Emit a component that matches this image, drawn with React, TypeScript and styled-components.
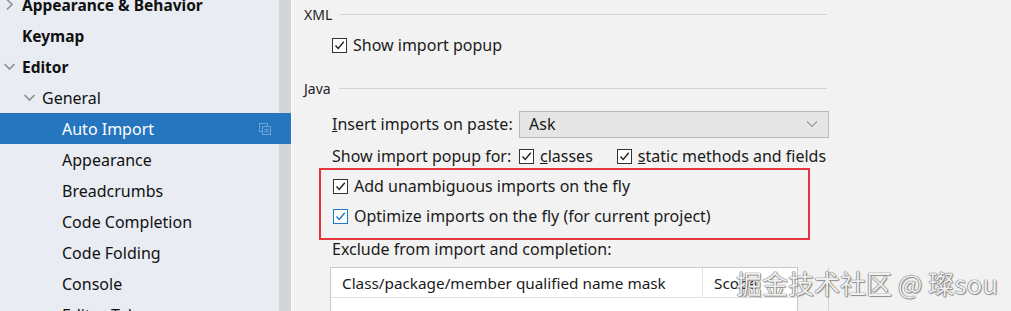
import React from "react";
import styled, { createGlobalStyle } from "styled-components";

const Global = createGlobalStyle`
  *, *::before, *::after { box-sizing: border-box; }
  body {
    margin: 0;
    background: #f2f2f2;
    font-family: "Noto Sans", "Open Sans", sans-serif;
    color: #1a1a1a;
  }
`;

type TreeItem = { label: string; level: number; bold?: boolean; arrow?: "right" | "down"; selected?: boolean };

const tree: TreeItem[] = [
  { label: "Appearance & Behavior", level: 0, bold: true, arrow: "right" },
  { label: "Keymap", level: 0, bold: true },
  { label: "Editor", level: 0, bold: true, arrow: "down" },
  { label: "General", level: 1, arrow: "down" },
  { label: "Auto Import", level: 2, selected: true },
  { label: "Appearance", level: 2 },
  { label: "Breadcrumbs", level: 2 },
  { label: "Code Completion", level: 2 },
  { label: "Code Folding", level: 2 },
  { label: "Console", level: 2 },
  { label: "Editor Tabs", level: 2 },
];

const Arrow = ({ dir }: { dir: "right" | "down" }) => (
  <svg width="13" height="13" viewBox="0 0 13 13">
    {dir === "right" ? (
      <path d="M4 1.5 L9 6.5 L4 11.5" fill="none" stroke="#8f9194" strokeWidth="1.7" />
    ) : (
      <path d="M1.5 4 L6.5 9 L11.5 4" fill="none" stroke="#8f9194" strokeWidth="1.7" />
    )}
  </svg>
);

const CopyIcon = () => (
  <svg width="12" height="12" viewBox="0 0 12 12">
    <rect x="0.5" y="0.5" width="8" height="8" fill="none" stroke="#6fa6d8" />
    <rect x="3.5" y="3.5" width="8" height="8" fill="#2a77c0" stroke="#6fa6d8" />
    <path d="M5.5 6.5 H9.5 M5.5 8.5 H9.5" stroke="#6fa6d8" />
  </svg>
);

const CheckMark = ({ color }: { color: string }) => (
  <svg width="13" height="13" viewBox="0 0 13 13">
    <path d="M2.5 6.5 L5.2 9.5 L10.8 2.8" fill="none" stroke={color} strokeWidth="1.4" />
  </svg>
);

const CheckBox = ({ label, accent, mnemonic }: { label: string; accent?: boolean; mnemonic?: boolean }) => (
  <Check>
    <Box $accent={accent}>
      <CheckMark color={accent ? "#1c78c8" : "#222"} />
    </Box>
    {mnemonic ? (
      <span>
        <u>{label[0]}</u>
        {label.slice(1)}
      </span>
    ) : (
      <span>{label}</span>
    )}
  </Check>
);

export default function App() {
  return (
    <>
      <Global />
      <Frame>
        <Sidebar>
          <TreeList>
            {tree.map((t) => (
              <TreeRow key={t.label} $level={t.level} $selected={t.selected}>
                <ArrowSlot>{t.arrow && <Arrow dir={t.arrow} />}</ArrowSlot>
                <TreeLabel $bold={t.bold}>{t.label}</TreeLabel>
                {t.selected && (
                  <RowIcon>
                    <CopyIcon />
                  </RowIcon>
                )}
              </TreeRow>
            ))}
          </TreeList>
        </Sidebar>
        <Content>
          <Section>
            <SectionTitle>XML</SectionTitle>
            <Rule />
          </Section>
          <Indented $top={2}>
            <CheckBox label="Show import popup" />
          </Indented>
          <Section $top={14}>
            <SectionTitle>Java</SectionTitle>
            <Rule />
          </Section>
          <FormGrid>
            <FieldLabel>
              <u>I</u>nsert imports on paste:
            </FieldLabel>
            <Select>
              <span>Ask</span>
              <svg width="12" height="8" viewBox="0 0 12 8">
                <path d="M1 1.5 L6 6.5 L11 1.5" fill="none" stroke="#9a9a9a" strokeWidth="1.2" />
              </svg>
            </Select>
            <FieldLabel>Show import popup for:</FieldLabel>
            <CheckGroup>
              <CheckBox label="classes" mnemonic />
              <CheckBox label="static methods and fields" mnemonic />
            </CheckGroup>
          </FormGrid>
          <Highlight>
            <HighlightRow>
              <CheckBox label="Add unambiguous imports on the fly" />
            </HighlightRow>
            <HighlightRow>
              <CheckBox label="Optimize imports on the fly (for current project)" accent />
            </HighlightRow>
          </Highlight>
          <Caption>Exclude from import and completion:</Caption>
          <TableArea>
            <Table>
              <HeaderRow>
                <HeadCell $width={372}>Class/package/member qualified name mask</HeadCell>
                <HeadCell>Scope</HeadCell>
              </HeaderRow>
            </Table>
            <SideStrip />
          </TableArea>
        </Content>
        <Watermark>掘金技术社区 @ 璨sou</Watermark>
      </Frame>
    </>
  );
}

const Frame = styled.div`
  position: relative;
  display: flex;
  height: 311px;
  overflow: hidden;
  font-size: 16px;
`;

const Sidebar = styled.div`
  width: 291px;
  flex-shrink: 0;
  background: linear-gradient(to right, #e9ecf2 0, #e9ecf2 279px, #d3d5d9 279px);
`;

const TreeList = styled.div`
  margin-top: -11px;
`;

const TreeRow = styled.div<{ $level: number; $selected?: boolean }>`
  display: flex;
  align-items: center;
  height: 31px;
  padding-left: ${(p) => 3 + p.$level * 20}px;
  padding-right: 20px;
  background: ${(p) => (p.$selected ? "#2675bf" : "transparent")};
  color: ${(p) => (p.$selected ? "#fff" : "#111")};
`;

const ArrowSlot = styled.div`
  width: 19px;
  display: flex;
  align-items: center;
`;

const TreeLabel = styled.span<{ $bold?: boolean }>`
  font-weight: ${(p) => (p.$bold ? 700 : 400)};
  font-size: ${(p) => (p.$bold ? 15.5 : 16)}px;
  flex: 1;
`;

const RowIcon = styled.div`
  display: flex;
`;

const Content = styled.div`
  flex: 1;
  border-left: 1px solid #fafafa;
  padding: 0 182px 0 12px;
`;

const Section = styled.div<{ $top?: number }>`
  display: flex;
  align-items: center;
  gap: 8px;
  height: 28px;
  margin-top: ${(p) => p.$top ?? 0}px;
`;

const SectionTitle = styled.span`
  font-size: 14px;
  color: #222;
`;

const Rule = styled.div`
  flex: 1;
  height: 1px;
  margin-right: 2px;
  background: #d3d3d3;
`;

const Indented = styled.div<{ $top: number }>`
  padding-left: 28px;
  height: 30px;
  display: flex;
  align-items: center;
  margin-top: ${(p) => p.$top}px;
`;

const Check = styled.label`
  display: inline-flex;
  align-items: center;
  gap: 6px;
  white-space: nowrap;
`;

const Box = styled.span<{ $accent?: boolean }>`
  width: 15px;
  height: 15px;
  border: 1px solid ${(p) => (p.$accent ? "#1c78c8" : "#333")};
  background: #fff;
  display: flex;
  align-items: center;
  justify-content: center;
`;

const FormGrid = styled.div`
  display: grid;
  grid-template-columns: 187px 1fr;
  grid-auto-rows: 32px;
  align-items: center;
  padding-left: 28px;
  margin-top: 6px;
`;

const FieldLabel = styled.span`
  white-space: nowrap;
`;

const Select = styled.div`
  height: 27px;
  border: 1px solid #b9b9b9;
  background: #e6e6e6;
  display: flex;
  align-items: center;
  justify-content: space-between;
  padding: 0 10px 0 9px;
`;

const CheckGroup = styled.div`
  display: flex;
  gap: 24px;
`;

const Highlight = styled.div`
  border: 2px solid #e5343d;
  margin: -4px 19px 0 15px;
  padding: 1px 0 7px 12px;
`;

const HighlightRow = styled.div`
  height: 30px;
  display: flex;
  align-items: center;
`;

const Caption = styled.div`
  padding-left: 28px;
  height: 18px;
  line-height: 18px;
  white-space: nowrap;
`;

const TableArea = styled.div`
  display: flex;
  margin: 9px 0 0 26px;
  height: 60px;
`;

const Table = styled.div`
  width: 468px;
  background: #fff;
  border: 1px solid #c9c9c9;
  border-bottom: none;
`;

const HeaderRow = styled.div`
  display: flex;
  height: 30px;
  border-bottom: 1px solid #e2e2e2;
  font-size: 15.3px;
`;

const HeadCell = styled.div<{ $width?: number }>`
  width: ${(p) => (p.$width ? `${p.$width}px` : "auto")};
  padding-left: 11px;
  display: flex;
  align-items: center;
  white-space: nowrap;
  overflow: hidden;
  border-right: ${(p) => (p.$width ? "1px solid #e2e2e2" : "none")};
`;

const SideStrip = styled.div`
  width: 31px;
  border-right: 1px solid #d6d6d6;
`;

const Watermark = styled.div`
  position: absolute;
  right: 13px;
  bottom: 10px;
  font-family: "Noto Sans CJK SC", "Noto Sans", sans-serif;
  font-size: 26px;
  color: rgba(255, 255, 255, 0.92);
  text-shadow: 0 0 1px #555, 0 0 1px #555, 1px 1px 1px rgba(0, 0, 0, 0.35);
`;
